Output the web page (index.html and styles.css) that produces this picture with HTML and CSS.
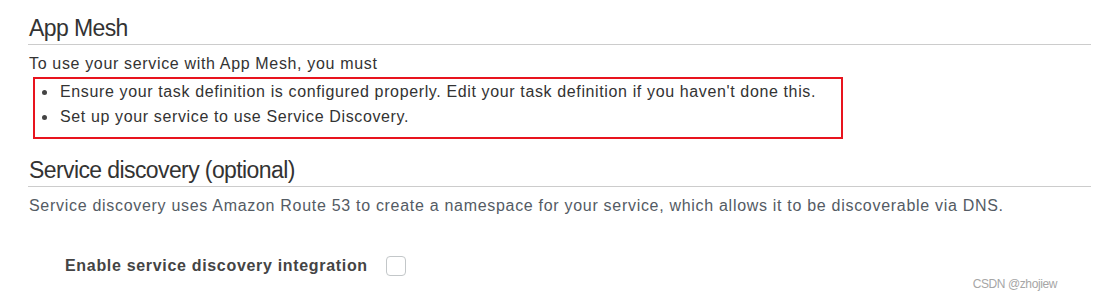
FILE: index.html
```html
<!DOCTYPE html>
<html lang="en">
<head>
<meta charset="utf-8">
<title>App Mesh</title>
<link rel="stylesheet" href="styles.css">
</head>
<body>
<div class="page">
  <section class="section">
    <h2 class="section-title">App Mesh</h2>
    <p class="intro">To use your service with App Mesh, you must</p>
    <div class="highlight">
      <ul class="steps">
        <li>Ensure your task definition is configured properly. Edit your task definition if you haven't done this.</li>
        <li>Set up your service to use Service Discovery.</li>
      </ul>
    </div>
  </section>
  <section class="section second">
    <h2 class="section-title">Service discovery (optional)</h2>
    <p class="desc">Service discovery uses Amazon Route 53 to create a namespace for your service, which allows it to be discoverable via DNS.</p>
    <div class="field">
      <label class="field-label" for="sd">Enable service discovery integration</label>
      <span class="checkbox" id="sd"></span>
    </div>
  </section>
  <div class="watermark">CSDN @zhojiew</div>
</div>
</body>
</html>
```

FILE: styles.css
```css
html, body {
  margin: 0;
  padding: 0;
  background: #ffffff;
}

body {
  font-family: "Liberation Sans", Arial, sans-serif;
  color: #444444;
  width: 1100px;
  height: 300px;
  overflow: hidden;
}

.page {
  position: relative;
  height: 300px;
  padding: 14px 9px 0 28px;
  box-sizing: border-box;
}

.section-title {
  margin: 0;
  font-size: 23px;
  line-height: 28px;
  letter-spacing: -0.6px;
  font-weight: normal;
  color: #333333;
  padding: 0 0 2px 1px;
  border-bottom: 1px solid #cccccc;
}

.intro {
  margin: 9px 0 0 1px;
  font-size: 16px;
  line-height: 20px;
  letter-spacing: 0.66px;
  color: #333333;
}

.highlight {
  margin: 3px 0 0 5px;
  width: 806px;
  border: 2px solid #e8141e;
  padding: 0 0 8px 0;
}

.steps {
  list-style: none;
  margin: 0;
  padding: 0 0 0 7px;
  font-size: 16px;
  line-height: 25px;
  letter-spacing: 0.63px;
  color: #333333;
}

.steps li::before {
  content: "";
  display: inline-block;
  width: 5px;
  height: 5px;
  border-radius: 50%;
  background: #444444;
  margin: 0 13px 0 0;
  vertical-align: middle;
}

.second {
  margin-top: 17px;
}

.desc {
  margin: 9px 0 0 1px;
  font-size: 16px;
  line-height: 20px;
  letter-spacing: 0.7px;
  color: #545b64;
}

.field {
  display: flex;
  align-items: center;
  gap: 18px;
  margin: 40px 0 0 37px;
}

.field-label {
  font-size: 16px;
  line-height: 20px;
  letter-spacing: 0.68px;
  font-weight: bold;
  color: #444444;
}

.checkbox {
  display: block;
  width: 18px;
  height: 18px;
  border: 1px solid #c3c7c9;
  border-radius: 4px;
  background: #ffffff;
}

.watermark {
  position: absolute;
  right: 43px;
  bottom: 8px;
  font-size: 12px;
  line-height: 16px;
  letter-spacing: -0.4px;
  color: #a6a6a6;
}
```
